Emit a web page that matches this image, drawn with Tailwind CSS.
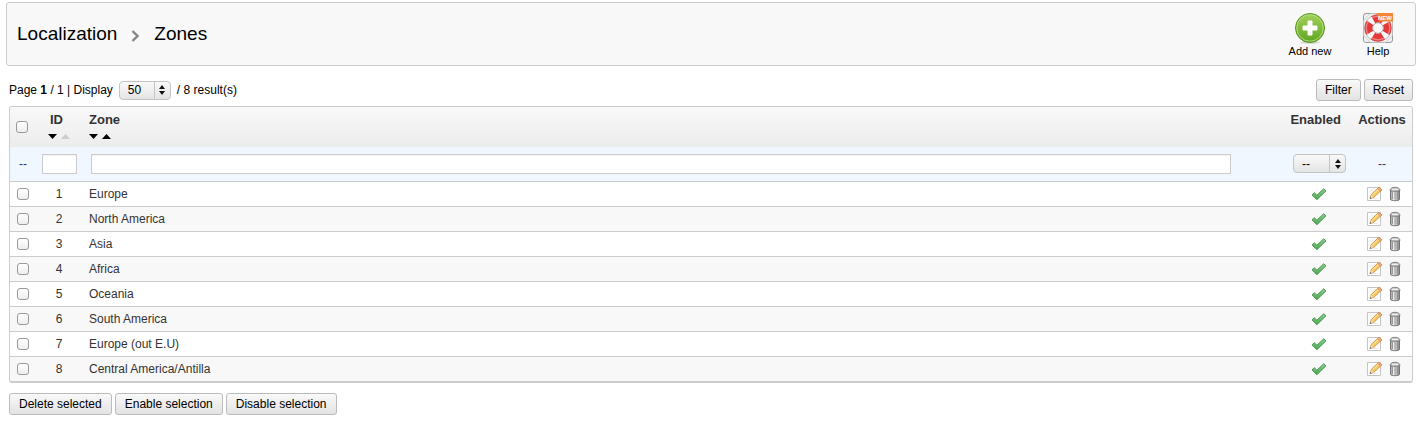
<!DOCTYPE html>
<html lang="en">
<head>
    <meta charset="UTF-8">
    <meta name="viewport" content="width=device-width, initial-scale=1.0">
    <title>Localization - Zones</title>
    <script src="https://cdn.jsdelivr.net/npm/@tailwindcss/browser@4"></script>
</head>
<body class="bg-white font-['Liberation_Sans',Arial,sans-serif] text-[12px] leading-4 text-black">
    <!-- Icon sprites -->
    <svg class="absolute h-0 w-0">
        <defs>
            <linearGradient id="green" x1="0" y1="0" x2="0" y2="1">
                <stop offset="0" stop-color="#a3d25c"/>
                <stop offset="1" stop-color="#5fa51f"/>
            </linearGradient>
            <linearGradient id="tick" x1="0" y1="0" x2="0" y2="1">
                <stop offset="0" stop-color="#8ad08c"/>
                <stop offset="1" stop-color="#4aa951"/>
            </linearGradient>
            <linearGradient id="metal" x1="0" y1="0" x2="1" y2="0">
                <stop offset="0" stop-color="#9a9a9a"/>
                <stop offset=".35" stop-color="#f0f0f0"/>
                <stop offset="1" stop-color="#858585"/>
            </linearGradient>
        </defs>
        <symbol id="icon-check" viewBox="0 0 16 16">
            <path d="M1 8.900l2.200-2.200 2.700 2.500 6.800-6.400 2.300 2-9.100 8.900z" fill="url(#tick)" stroke="#3f8f46" stroke-width=".9" stroke-linejoin="round"/>
        </symbol>
        <symbol id="icon-edit" viewBox="0 0 16 16">
            <path d="M.5 1.5h13v13H.5z" fill="#fff" stroke="#c4c4c4"/>
            <path d="M3 4h6M3 6h5M3 12.500h8" stroke="#eee"/>
            <path d="M3 12.500l1.200-4L12 1.300l2.900 2.500-8 7.500z" fill="#f8c765" stroke="#c08a3c" stroke-width=".8" stroke-linejoin="round"/>
            <path d="M5.300 9l7-6.600" stroke="#fff0b0"/>
            <path d="M10.700 2.600L12 1.300l2.900 2.500-1.400 1.400z" fill="#f2b183" stroke="#c98255" stroke-width=".6"/>
            <path d="M3 12.500l1-3.400 2.300 2.200z" fill="#f4dfbd"/>
            <path d="M2.700 12.800l.6-1.900 1.400 1.300z" fill="#555"/>
        </symbol>
        <symbol id="icon-trash" viewBox="0 0 16 16">
            <path d="M3.500 4.500h9v8.700c0 2-9 2-9 0z" fill="url(#metal)" stroke="#6c6c6c" stroke-width=".9"/>
            <path d="M5.500 6v7M8 6v7.500M10.500 6v7" stroke="#8a8a8a" stroke-width=".8"/>
            <path d="M3 4.600c0-1 .6-1.800 1.300-2.400C5.500 1 10.500 1 11.700 2.200c.7.600 1.300 1.400 1.300 2.400-2 1-8 1-10 0z" fill="#c4c4c4" stroke="#707070" stroke-width=".8"/>
            <path d="M5 3.400h6" stroke="#f4f4f4"/>
        </symbol>
        <symbol id="icon-down" viewBox="0 0 9 5"><path d="M0 0h9L4.500 5z" fill="currentColor"/></symbol>
        <symbol id="icon-up" viewBox="0 0 9 5"><path d="M0 5h9L4.500 0z" fill="currentColor"/></symbol>
        <symbol id="icon-updown" viewBox="0 0 6 10"><path d="M0 4h6L3 0zM0 6h6l-3 4z" fill="#111"/></symbol>
    </svg>

    <!-- Page title and toolbar -->
    <header class="mt-[2px] ml-[6px] flex h-16 items-start justify-between rounded-[3px] border border-[#ccc] bg-[#f8f8f8] pr-[11px] pl-[10px]">
        <h1 class="flex items-center pt-[19px] text-[19px] leading-6">
            <span>Localization</span>
            <svg class="mt-1 mr-[14px] ml-[14px] h-3 w-[9px]" viewBox="0 0 9 12"><path d="M1.500 1l5 5-5 5" fill="none" stroke="#858585" stroke-width="2.400"/></svg>
            <span>Zones</span>
        </h1>
        <nav class="flex gap-4 pt-[9px] text-[11px] leading-[14px]">
            <a href="#" class="flex w-[52px] flex-col items-center">
                <svg class="h-8 w-8" viewBox="0 0 32 32">
                    <ellipse cx="16" cy="30.500" rx="10" ry="1.300" fill="#d8d8d8"/>
                    <circle cx="16" cy="16" r="14.500" fill="url(#green)" stroke="#57961d"/>
                    <circle cx="16" cy="16" r="13.200" fill="none" stroke="#b9de85" stroke-width=".9"/>
                    <path d="M14 9h4v5h5v4h-5v5h-4v-5H9v-4h5z" fill="#fff" stroke="#fff" stroke-linejoin="round"/>
                </svg>
                <span>Add new</span>
            </a>
            <a href="#" class="flex w-[52px] flex-col items-center">
                <svg class="h-8 w-8" viewBox="0 0 32 32">
                    <path d="M8 1.500h16l6.500 6.500v16L24 30.500H8L1.500 24V8z" fill="#eee" stroke="#bbb"/>
                    <path d="M1.500 8V4q0-2.500 2.500-2.500h4M1.500 24v4q0 2.500 2.500 2.500h4M24 30.500h4q2.500 0 2.500-2.500v-4" fill="#f0f0f0" stroke="#999"/>
                    <circle cx="16" cy="16" r="13.500" fill="#fafafa" stroke="#aaa" stroke-width=".8"/>
                    <circle cx="16" cy="16" r="9.500" fill="none" stroke="#e5383b" stroke-width="8" stroke-dasharray="10.500 4.423" stroke-dashoffset="5.250"/>
                    <circle cx="16" cy="16" r="11.800" fill="none" stroke="#f0807c" stroke-width="1.500" stroke-dasharray="13 5.535" stroke-dashoffset="6.500"/>
                    <circle cx="16" cy="16" r="5.300" fill="#f8f8f8" stroke="#a99" stroke-width=".9"/>
                    <path d="M14.500 1H31v8.500H17z" fill="#f58634"/>
                    <text x="16" y="7.500" font-size="6" font-weight="bold" fill="#fff">NEW</text>
                </svg>
                <span>Help</span>
            </a>
        </nav>
    </header>

    <main class="pr-[3px] pl-[9px]">
        <!-- Pagination and filter buttons -->
        <div class="mt-[13px] flex h-[22px] items-center justify-between">
            <div class="flex items-center">
                <label for="perPage">Page <b>1</b> / 1 | Display</label>
                <span class="relative mx-[6px]">
                    <select id="perPage" class="block h-[19px] w-[52px] appearance-none rounded-[4px] border border-[#c4c4c4] bg-linear-to-b from-[#f9f9f9] to-[#e4e4e4] pl-2 text-[12px] leading-4">
                        <option>20</option>
                        <option selected>50</option>
                        <option>100</option>
                    </select>
                    <span class="pointer-events-none absolute inset-y-px right-px flex w-4 items-center justify-center border-l border-[#c4c4c4]">
                        <svg class="h-[10px] w-[6px]"><use href="#icon-updown"/></svg>
                    </span>
                </span>
                <span>/ 8 result(s)</span>
            </div>
            <div class="flex gap-[3px]">
                <button type="submit" class="h-[22px] rounded-[3px] border border-[#bbb] bg-linear-to-b from-[#f9f9f9] to-[#e3e3e3] px-2">Filter</button>
                <button type="reset" class="h-[22px] rounded-[3px] border border-[#bbb] bg-linear-to-b from-[#f9f9f9] to-[#e3e3e3] px-2">Reset</button>
            </div>
        </div>

        <!-- Zones list -->
        <div class="mt-[5px] overflow-hidden rounded-[3px] border border-b-2 border-[#ccc]">
            <table class="w-full table-fixed text-[#333]">
                <colgroup>
                    <col class="w-[30px]">
                    <col class="w-[40px]">
                    <col>
                    <col class="w-[80px]">
                    <col class="w-[60px]">
                </colgroup>
                <thead>
                    <tr class="h-10 bg-linear-to-b from-[#f9f9f9] to-[#ececec] align-top text-[13px] leading-4">
                        <th class="pt-[14px] pl-[6px] text-left">
                            <input type="checkbox" aria-label="Select all" class="block h-3 w-3 appearance-none rounded-[3px] border border-[#999] bg-linear-to-b from-white to-[#eee]">
                        </th>
                        <th class="pt-[5px] pl-2 text-left">
                            <span class="block pl-[2px]">ID</span>
                            <span class="mt-[6px] flex gap-1">
                                <a href="#" aria-label="Sort ID descending" class="text-black"><svg class="h-[5px] w-[9px]"><use href="#icon-down"/></svg></a>
                                <a href="#" aria-label="Sort ID ascending" class="text-[#ccc]"><svg class="h-[5px] w-[9px]"><use href="#icon-up"/></svg></a>
                            </span>
                        </th>
                        <th class="pt-[5px] pl-[9px] text-left">
                            Zone
                            <span class="mt-[6px] flex gap-1 text-black">
                                <a href="#" aria-label="Sort zone descending"><svg class="h-[5px] w-[9px]"><use href="#icon-down"/></svg></a>
                                <a href="#" aria-label="Sort zone ascending"><svg class="h-[5px] w-[9px]"><use href="#icon-up"/></svg></a>
                            </span>
                        </th>
                        <th class="pt-[5px] pr-[11px] text-right">Enabled</th>
                        <th class="pt-[5px] text-center">Actions</th>
                    </tr>
                    <tr class="h-[34px] border-b border-[#ccc] bg-[#f0f7ff]">
                        <td class="pl-[9px] text-[#336]">--</td>
                        <td class="pl-[2px]"><input type="text" aria-label="Filter by ID" class="block h-5 w-[35px] border border-[#ccc] bg-white px-1 inset-shadow-xs"></td>
                        <td class="pr-[41px] pl-[11px]"><input type="text" aria-label="Filter by zone" class="block h-5 w-full border border-[#ccc] bg-white px-1 inset-shadow-xs"></td>
                        <td class="pl-[21px]">
                            <span class="relative block w-[53px]">
                                <select aria-label="Filter by status" class="block h-[19px] w-full appearance-none rounded-[4px] border border-[#c4c4c4] bg-linear-to-b from-[#f9f9f9] to-[#e4e4e4] pl-2 text-[12px] leading-4 text-black">
                                    <option>--</option>
                                    <option>Yes</option>
                                    <option>No</option>
                                </select>
                                <span class="pointer-events-none absolute inset-y-px right-px flex w-4 items-center justify-center border-l border-[#c4c4c4]">
                                    <svg class="h-[10px] w-[6px]"><use href="#icon-updown"/></svg>
                                </span>
                            </span>
                        </td>
                        <td class="text-center text-[#336]">--</td>
                    </tr>
                </thead>
                <tbody id="zones"></tbody>
            </table>
        </div>

        <!-- Bulk actions -->
        <div class="mt-[10px] flex gap-[3px]">
            <button type="button" class="h-[22px] rounded-[3px] border border-[#bbb] bg-linear-to-b from-[#f9f9f9] to-[#e3e3e3] px-[9px]">Delete selected</button>
            <button type="button" class="h-[22px] rounded-[3px] border border-[#bbb] bg-linear-to-b from-[#f9f9f9] to-[#e3e3e3] px-[9px]">Enable selection</button>
            <button type="button" class="h-[22px] rounded-[3px] border border-[#bbb] bg-linear-to-b from-[#f9f9f9] to-[#e3e3e3] px-[9px]">Disable selection</button>
        </div>
    </main>

    <script>
        const zones = ['Europe', 'North America', 'Asia', 'Africa', 'Oceania', 'South America', 'Europe (out E.U)', 'Central America/Antilla'];

        document.getElementById('zones').innerHTML = zones.map((zone, i) => `
            <tr class="h-[25px] border-b border-[#ccc] last:border-b-0 even:bg-[#f8f8f8]">
                <td class="pl-[7px]"><input type="checkbox" aria-label="Select ${zone}" class="block h-3 w-3 appearance-none rounded-[3px] border border-[#999] bg-linear-to-b from-white to-[#eee]"></td>
                <td class="pr-[2px] text-center">${i + 1}</td>
                <td class="pl-[9px]">${zone}</td>
                <td><a href="#" aria-label="Enabled" class="ml-[39px] block w-4"><svg class="h-4 w-4"><use href="#icon-check"/></svg></a></td>
                <td>
                    <div class="flex gap-1 pl-[15px]">
                        <a href="#" aria-label="Edit"><svg class="h-4 w-4"><use href="#icon-edit"/></svg></a>
                        <a href="#" aria-label="Delete"><svg class="h-4 w-4"><use href="#icon-trash"/></svg></a>
                    </div>
                </td>
            </tr>`).join('');
    </script>
</body>
</html>
